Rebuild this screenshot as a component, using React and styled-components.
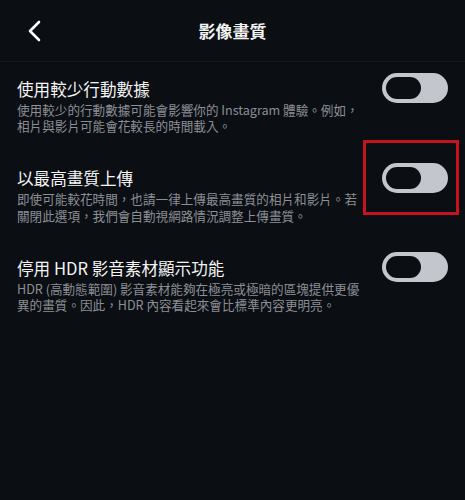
import React from "react";
import styled, { createGlobalStyle } from "styled-components";

const Global = createGlobalStyle`
  html, body {
    margin: 0;
    padding: 0;
    background: #0b0e13;
  }
  body {
    font-family: "Noto Sans CJK TC", "Noto Sans", sans-serif;
    -webkit-font-smoothing: antialiased;
  }
`;

const Page = styled.div`
  width: 465px;
  min-height: 500px;
  background: #0b0e13;
  color: #f3f3f3;
`;

const Header = styled.header`
  height: 61px;
  display: grid;
  grid-template-columns: 1fr auto 1fr;
  align-items: center;
  border-bottom: 1px solid #161a20;
`;

const BackButton = styled.button`
  justify-self: start;
  margin-left: 25px;
  margin-top: 1px;
  width: 18px;
  height: 24px;
  padding: 0;
  border: 0;
  background: transparent;
  color: #ffffff;
  display: flex;
  align-items: center;
  justify-content: center;
`;

const Title = styled.h1`
  margin: 0;
  font-family: "Noto Sans CJK TC", sans-serif;
  font-size: 17px;
  font-weight: 700;
  line-height: 24px;
  color: #f2f2f2;
`;

const List = styled.div`
  display: flex;
  flex-direction: column;
  gap: 27.5px;
  padding-top: 11px;
`;

const Row = styled.div`
  display: flex;
  align-items: flex-start;
  padding: 0 17px;
  gap: 16px;
`;

const TextCol = styled.div`
  flex: 1;
  min-width: 0;
  padding-top: 4.5px;
`;

const RowTitle = styled.div`
  font-size: 16.6px;
  line-height: 22px;
  font-weight: 400;
  color: #f4f4f4;
  white-space: nowrap;
`;

const RowDesc = styled.p`
  margin: 2px 0 0;
  font-size: 12.6px;
  line-height: 16.8px;
  color: #8c8f95;
  white-space: nowrap;
`;

const ToggleWrap = styled.div`
  position: relative;
  flex-shrink: 0;
  width: 66px;
  height: 30px;
`;

const Track = styled.button`
  width: 66px;
  height: 30px;
  border-radius: 15px;
  border: 0;
  padding: 4px;
  background: #c3c6cd;
  display: flex;
  align-items: center;
  justify-content: ${(p) => (p.$on ? "flex-end" : "flex-start")};
  box-sizing: border-box;
`;

const Knob = styled.span`
  display: block;
  width: 35px;
  height: 22px;
  border-radius: 11px;
  background: #0b0e13;
`;

const Highlight = styled.div`
  position: absolute;
  left: -19px;
  top: -23px;
  width: 96px;
  height: 75px;
  box-sizing: border-box;
  border: 3px solid #c7131b;
  pointer-events: none;
`;

const items = [
  {
    title: "使用較少行動數據",
    lines: [
      "使用較少的行動數據可能會影響你的 Instagram 體驗。例如，",
      "相片與影片可能會花較長的時間載入。",
    ],
  },
  {
    title: "以最高畫質上傳",
    lines: [
      "即使可能較花時間，也請一律上傳最高畫質的相片和影片。若",
      "關閉此選項，我們會自動視網路情況調整上傳畫質。",
    ],
    highlight: true,
  },
  {
    title: "停用 HDR 影音素材顯示功能",
    lines: [
      "HDR (高動態範圍) 影音素材能夠在極亮或極暗的區塊提供更優",
      "異的畫質。因此，HDR 內容看起來會比標準內容更明亮。",
    ],
  },
];

export default function App() {
  return (
    <Page lang="zh-Hant">
      <Global />
      <Header>
        <BackButton aria-label="返回">
          <svg width="14" height="22" viewBox="0 0 14 22" fill="none">
            <polyline
              points="12,2 3,11 12,20"
              stroke="#ffffff"
              strokeWidth="2.6"
              strokeLinecap="round"
              strokeLinejoin="round"
            />
          </svg>
        </BackButton>
        <Title>影像畫質</Title>
        <span />
      </Header>
      <List>
        {items.map((it) => (
          <Row key={it.title}>
            <TextCol>
              <RowTitle>{it.title}</RowTitle>
              <RowDesc>
                {it.lines[0]}
                <br />
                {it.lines[1]}
              </RowDesc>
            </TextCol>
            <ToggleWrap>
              <Track aria-label={it.title}>
                <Knob />
              </Track>
              {it.highlight && <Highlight />}
            </ToggleWrap>
          </Row>
        ))}
      </List>
    </Page>
  );
}
